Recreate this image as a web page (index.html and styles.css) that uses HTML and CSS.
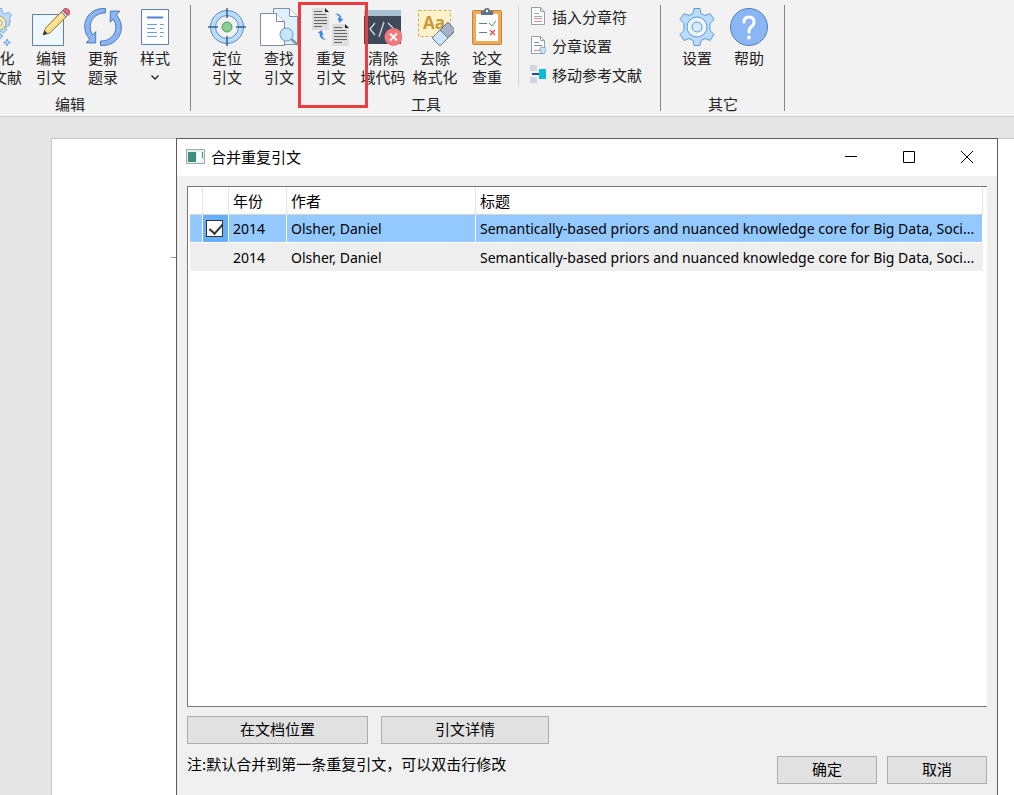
FILE: index.html
```html
<!DOCTYPE html>
<html lang="zh-CN">
<head>
<meta charset="utf-8">
<title>合并重复引文</title>
<link rel="stylesheet" href="styles.css">
</head>
<body>
<header class="ribbon">
  <section class="group group-edit">
    <div class="tools">
      <button type="button" class="tool tool-edge">
        <svg class="icon" viewBox="0 0 38 38"><path d="M19.500.5h4l1 4 3 1.500 3-2 3 3-2 3.500 1 3h-1v4l-4 1.500 1 3-3 3-3.500-2-2.500 1-1 3h-3z" fill="#b9dcff" stroke="#7da7e0"/><circle cx="21" cy="15" r="7" fill="#ffe79b" stroke="#8fa6c4"/><circle cx="21" cy="15" r="3" fill="#f2f2f2" stroke="#8fa6c4"/><path d="M29 31l1 2.500 2.500 1L30 35.500 29 38l-1-2.500-2.500-1 2.500-1zM22 25l1 2 2 1-2 1-1 2-1-2-2-1 2-1z" fill="#b6ddff" stroke="#6f9fdc"/></svg>
        <span>化<br>文献</span>
      </button>
      <button type="button" class="tool">
        <svg class="icon" viewBox="0 0 38 38"><path d="M.5 6.500h31v31H.5z" fill="#f0f8ff" stroke="#5f7fae"/><path d="M11 27l2.500-7L30 3l5 5-17 17z" fill="#ffd97a" stroke="#8a7a52"/><path d="M15.500 22L32 5.500" stroke="#fff0bd" stroke-width="1.500"/><path d="M11 27l1.500-4.500 3 3z" fill="#333"/><path d="M29 4l5 5 1.500-1.500-5-5z" fill="#c9d6e4" stroke="#72849a"/><path d="M31 2l2-1.500q2-.5 4 1.500t.5 4L36 7.500z" fill="#e86b79" stroke="#b54c5b"/></svg>
        <span>编辑<br>引文</span>
      </button>
      <button type="button" class="tool">
        <svg class="icon" viewBox="0 0 38 38"><g fill="#8ab6f5" stroke="#4c79b5"><path d="M21.500.6V5C10 4.500 1.800 16 8.700 27l3-3.300v11.200H2.300L5.500 31C-5.500 18 3.500-1 21.500.6z"/><path d="M16.500 37.400V33C28 33.500 36.200 22 29.300 11l-3 3.300V3.100h9.400L32.500 7C43.500 20 34.500 39 16.500 37.400z"/></g></svg>
        <span>更新<br>题录</span>
      </button>
      <button type="button" class="tool">
        <svg class="icon" viewBox="0 0 38 38"><path d="M5.500 1.500h27v35h-27z" fill="#fff" stroke="#5f7fae"/><path d="M11 9.500h16" stroke="#4d83cf" stroke-width="2"/><path d="M11 16.500h10M11 20.500h8M11 24.500h10M11 28.500h10" stroke="#6b9de0"/><path d="M24 16.500h4M24 20.500h3M24 24.500h4M24 28.500h3" stroke="#6b9de0"/></svg>
        <span>样式</span>
        <svg class="chevron" viewBox="0 0 8 5"><path d="M.5 .5L4 4 7.500.5" fill="none" stroke="#222" stroke-width="1.300"/></svg>
      </button>
    </div>
    <h2 class="caption">编辑</h2>
  </section>

  <section class="group group-tools">
    <div class="tools">
      <button type="button" class="tool">
        <svg class="icon" viewBox="0 0 38 38"><circle cx="19" cy="19" r="14" fill="none" stroke="#b9dcff" stroke-width="5"/><g fill="none" stroke="#5c87b8"><circle cx="19" cy="19" r="16.500"/><circle cx="19" cy="19" r="11.500"/></g><path d="M19 0v10M19 28v10M0 19h10M28 19h10" stroke="#2f6399" stroke-width="1.500"/><circle cx="19" cy="19" r="5" fill="#8bcf96" stroke="#4c9b62"/></svg>
        <span>定位<br>引文</span>
      </button>
      <button type="button" class="tool">
        <svg class="icon" viewBox="0 0 38 38"><path d="M13.500.5h16l8 8v28h-24z" fill="#dff0ff" stroke="#7d93ad"/><path d="M29.500.5v8h8" fill="#fff" stroke="#7d93ad"/><path d="M.5 5.500h16l8 8v24H.5z" fill="#fff" stroke="#7d8da3"/><path d="M16.500 5.500v8h8" fill="#fff" stroke="#7d8da3"/><path d="M31 31l7 6" stroke="#8595a8" stroke-width="2.500"/><circle cx="26.500" cy="26.500" r="6.500" fill="#c5e4ff" stroke="#7298bd"/></svg>
        <span>查找<br>引文</span>
      </button>
      <button type="button" class="tool tool-marked">
        <svg class="icon" viewBox="0 0 38 38"><g id="copy-page"><path d="M0 0h13l4 4v18H0z" fill="#dedede"/><path d="M13 0v4h4z" fill="#222"/><path d="M2 3.500h8M2 6.500h12M2 9.500h13M2 12.500h13M2 15.500h13M2 18.500h8" stroke="#666"/></g><use href="#copy-page" x="20" y="16"/><path d="M23 6q6-1 6.500 5h2l-4 4-2-5h2q-.5-3-4.500-4zM15 32q-8 0-7.500-7h-2l4-3 2 5h-1.500q1 4 5 5z" fill="#4189eb"/></svg>
        <span>重复<br>引文</span>
      </button>
      <button type="button" class="tool">
        <svg class="icon" viewBox="0 0 38 38"><path d="M0 2h37v7H0z" fill="#a9c0d3"/><path d="M0 8h37v28H0z" fill="#40495a"/><path d="M11 15l-5 6 5 6M20 14l-5 15M24 15l5 5" fill="none" stroke="#d6dbe2" stroke-width="1.300"/><circle cx="29.500" cy="29" r="9" fill="#f3777c"/><path d="M26 25.500l7 7M33 25.500l-7 7" stroke="#fff" stroke-width="1.800"/></svg>
        <span>清除<br>域代码</span>
      </button>
      <button type="button" class="tool">
        <svg class="icon" viewBox="0 0 38 38"><path d="M2.500 2.500h32v26h-32z" fill="#fff2ca" stroke="#d6ad48" stroke-dasharray="3 2"/><text class="icon-letters" x="7" y="21">Aa</text><path d="M17 29l13-13q1-1 2 0l6 6q1 1 0 2L25 37q-1 1-2 0l-6-6q-1-1 0-2z" fill="#cde6ff" stroke="#667991"/><path d="M24 22l7-7q1-1 2 0l5 6q1 1 0 2l-6 7z" fill="#a7b3c6" stroke="#667991"/></svg>
        <span>去除<br>格式化</span>
      </button>
      <button type="button" class="tool">
        <svg class="icon" viewBox="0 0 38 38"><rect x="4.500" y="2.500" width="29" height="34" rx="1" fill="#f0ac52" stroke="#bd8540"/><path d="M8 6h22v27H8z" fill="#fff"/><path d="M13 7V3h3q0-3 3-3t3 3h3v4z" fill="#60748e"/><circle cx="19" cy="3" r="1.200" fill="#fff"/><path d="M11 15.500h8M11 24.500h8" stroke="#697b92"/><path d="M21 15l3 3 4-5" fill="none" stroke="#449d62"/><path d="M22 22l5 5M27 22l-5 5" stroke="#dc4f52" stroke-width="1.300"/></svg>
        <span>论文<br>查重</span>
      </button>
      <div class="small-tools">
        <button type="button" class="small-tool">
          <svg class="small-icon" viewBox="0 0 16 18"><path d="M1.500.5h9l4 4v13h-13z" fill="#fff" stroke="#96a0aa"/><path d="M10.500.5v4h4" fill="none" stroke="#96a0aa"/><path d="M4 6.500h5M4 9.500h8" stroke="#9aa"/><path d="M4 11.500h8M4 14.500h8" stroke="#ee8792"/></svg>
          插入分章符
        </button>
        <button type="button" class="small-tool">
          <svg class="small-icon" viewBox="0 0 16 18"><path d="M1.500.5h9l4 4v13h-13z" fill="#fff" stroke="#96a0aa"/><path d="M10.500.5v4h4" fill="none" stroke="#96a0aa"/><path d="M4 6.500h5M4 9.500h8" stroke="#889"/><path d="M4 14.500h6" stroke="#ee8792"/><path d="M10 12l3-1 3 1v3l-3 3-3-3z" fill="#cce9fc" stroke="#72abd5"/></svg>
          分章设置
        </button>
        <button type="button" class="small-tool">
          <svg class="small-icon" viewBox="0 0 16 18"><path d="M0 0h7v6H0zM0 12h7v6H0z" fill="#d3d6de"/><path d="M2 8h7v2H2z" fill="#284795"/><path d="M9 4h7v10H9z" fill="#06bfd2"/></svg>
          移动参考文献
        </button>
      </div>
    </div>
    <h2 class="caption">工具</h2>
  </section>

  <section class="group group-other">
    <div class="tools">
      <button type="button" class="tool">
        <svg class="icon" viewBox="0 0 38 38"><path d="M16 .5h6l1 5 4 2 5-2 4 6-4 4v7l4 4-4 6-5-2-4 2-1 5h-6l-1-5-4-2-5 2-4-6 4-4v-7l-4-4 4-6 5 2 4-2z" fill="#b9dcff" stroke="#5f97d3" stroke-linejoin="round"/><circle cx="19" cy="19" r="10" fill="#edf6ff" stroke="#5f97d3"/><circle cx="19" cy="19" r="5" fill="#d5eaff" stroke="#5f97d3"/></svg>
        <span>设置</span>
      </button>
      <button type="button" class="tool">
        <svg class="icon" viewBox="0 0 38 38"><circle cx="19" cy="19" r="18.500" fill="#8ab6f5" stroke="#4e7db8"/><path d="M14 14q0-5 5-5t5 5q0 3-3 5-2 1.500-2 5" fill="none" stroke="#fff" stroke-width="3" stroke-linecap="round"/><circle cx="19" cy="29.500" r="2" fill="#fff"/></svg>
        <span>帮助</span>
      </button>
    </div>
    <h2 class="caption">其它</h2>
  </section>
</header>

<main class="workspace">
  <div class="sheet"></div>
  <section class="dialog" role="dialog" aria-labelledby="dialog-title">
    <div class="titlebar">
      <svg class="app-icon" viewBox="0 0 19 15"><path d="M.5.500h18v14H.5z" fill="#e9eef3" stroke="#9ea9b1"/><path d="M2 3h8v10H2z" fill="#3f8f80"/><path d="M11 3h4v10h-4z" fill="#fff"/><path d="M16.500 3v6" stroke="#4e9a80"/></svg>
      <h1 class="title" id="dialog-title">合并重复引文</h1>
      <button type="button" class="window-button" aria-label="最小化"><svg viewBox="0 0 12 12"><path d="M0 5.500h12" stroke="#000"/></svg></button>
      <button type="button" class="window-button" aria-label="最大化"><svg viewBox="0 0 12 12"><path d="M.5.500h11v11H.5z" fill="none" stroke="#000"/></svg></button>
      <button type="button" class="window-button" aria-label="关闭"><svg viewBox="0 0 12 12"><path d="M0 0l12 12M12 0L0 12" stroke="#000"/></svg></button>
    </div>
    <div class="dialog-body">
      <div class="list">
        <table class="citations">
          <colgroup><col class="col-handle"><col class="col-check"><col class="col-year"><col class="col-author"><col></colgroup>
          <thead>
            <tr><th></th><th></th><th>年份</th><th>作者</th><th>标题</th></tr>
          </thead>
          <tbody>
            <tr class="selected"><td></td><td class="check-cell"><input type="checkbox" class="check" aria-label="选择引文" checked></td><td>2014</td><td>Olsher, Daniel</td><td>Semantically-based priors and nuanced knowledge core for Big Data, Soci...</td></tr>
            <tr class="alternate"><td></td><td></td><td>2014</td><td>Olsher, Daniel</td><td>Semantically-based priors and nuanced knowledge core for Big Data, Soci...</td></tr>
          </tbody>
        </table>
      </div>
      <div class="actions">
        <button type="button" class="button button-locate">在文档位置</button>
        <button type="button" class="button button-details">引文详情</button>
      </div>
      <div class="footer">
        <p class="note">注:默认合并到第一条重复引文，可以双击行修改</p>
        <button type="button" class="button">确定</button>
        <button type="button" class="button">取消</button>
      </div>
    </div>
  </section>
</main>
</body>
</html>
```
FILE: styles.css
```css
* {
  box-sizing: border-box;
}

body {
  margin: 0;
  height: 100vh;
  display: flex;
  flex-direction: column;
  overflow: hidden;
  background: #e5e5e5;
  color: #222;
  font: 15px/19px "Noto Sans CJK SC", sans-serif;
}

button {
  font: inherit;
  color: inherit;
  padding: 0;
  border: 0;
  background: none;
}

svg {
  display: block;
}

h1,
h2,
p {
  margin: 0;
  font-size: 15px;
  font-weight: 400;
}

/* Ribbon */
.ribbon {
  display: flex;
  flex: none;
  padding: 5px 0;
  background: #f2f2f2;
  border-bottom: 1px solid #cdcdcd;
}

.group {
  flex: none;
  display: flex;
  flex-direction: column;
  justify-content: space-between;
  padding: 3px 9px 0 10px;
  border-right: 1px solid #858585;
  height: 106px;
}

.group-edit {
  margin-left: -50px;
  padding-left: 39px;
}

.group-tools {
  width: 470px;
}

.tools {
  display: flex;
}

.tool {
  position: relative;
  flex: none;
  width: 52px;
  display: flex;
  flex-direction: column;
  align-items: center;
  white-space: nowrap;
}

.tool-edge {
  width: 36px;
}

.tool-edge .icon {
  margin-left: -20px;
}

.icon {
  width: 38px;
  height: 38px;
  margin-bottom: 2px;
}

.icon-letters {
  font: 700 17px "Open Sans", sans-serif;
  fill: #c79a3b;
}

.chevron {
  width: 8px;
  height: 5px;
  margin-top: 8px;
}

.tool-marked::after {
  content: "";
  position: absolute;
  inset: -6px -11px -22px -7px;
  border: 3px solid #ec3c40;
  z-index: 1;
}

.small-tools {
  display: flex;
  flex-direction: column;
  gap: 9px;
  margin: -2px 0 0 5px;
  padding-left: 11px;
  border-left: 1px solid #d2d2d2;
}

.small-tool {
  display: flex;
  align-items: center;
  gap: 6px;
  height: 20px;
  white-space: nowrap;
}

.small-icon {
  width: 16px;
  height: 18px;
}

.caption {
  text-align: center;
  line-height: 14px;
}

.group-edit .caption {
  margin-left: -30px;
}

/* Document area */
.workspace {
  position: relative;
  flex: 1;
  min-height: 0;
  display: flex;
  padding: 21px 0 0 51px;
}

.sheet {
  flex: 1;
  background: #fff;
  border: 1px solid #c6c6c6;
  border-width: 1px 0 0 1px;
}

/* Dialog */
.dialog {
  position: absolute;
  top: 21px;
  bottom: 0;
  left: 176px;
  right: 16px;
  display: flex;
  flex-direction: column;
  background: #f0f0f0;
  border: 1px solid #5c5c5c;
  border-bottom: 0;
  color: #000;
}

.dialog::before {
  content: "";
  position: absolute;
  left: -6px;
  top: 118px;
  width: 5px;
  height: 1px;
  background: #999;
}

.titlebar {
  flex: none;
  display: flex;
  align-items: center;
  height: 37px;
  padding: 0 1px 2px 9px;
  background: #fff;
}

.app-icon {
  width: 19px;
  height: 15px;
  margin-right: 6px;
}

.title {
  flex: 1;
}

.window-button {
  width: 58px;
  height: 34px;
  display: flex;
  align-items: center;
  justify-content: center;
}

.window-button svg {
  width: 12px;
  height: 12px;
}

.dialog-body {
  flex: 1;
  min-height: 0;
  display: flex;
  flex-direction: column;
  padding: 10px 10px 11px;
}

.list {
  flex: 1;
  min-height: 0;
  padding: 0 4px 0 2px;
  overflow: hidden;
  background: #fff;
  border: 1px solid #777;
  border-right: 0;
}

.citations {
  width: 100%;
  table-layout: fixed;
  border-spacing: 0;
}

.col-handle {
  width: 13px;
}

.col-check {
  width: 26px;
}

.col-year {
  width: 58px;
}

.col-author {
  width: 189px;
}

.citations th,
.citations td {
  height: 28px;
  padding: 0 0 0 4px;
  text-align: left;
  font-weight: 400;
  white-space: nowrap;
  border-right: 1px solid #e5e5e5;
}

.citations th {
  border-bottom: 1px solid #d5d5d5;
}

.citations td {
  font: 14px/19px "Noto Sans", "Noto Sans CJK SC", sans-serif;
}

.selected td {
  background: #94c9ff;
  border-right-color: #fff;
  border-bottom: 1px solid #fff;
}

.citations .check-cell {
  padding-left: 3px;
  background: #66b0fb;
}

.alternate td {
  background: #eee;
  border-right-color: #eee;
}

.check {
  appearance: none;
  display: block;
  position: relative;
  width: 17px;
  height: 17px;
  margin: 0;
  background: #fff;
  border: 1px solid #333;
}

.check:checked::after {
  content: "";
  position: absolute;
  left: 5px;
  top: 0;
  width: 6px;
  height: 11px;
  border: solid #333;
  border-width: 0 2px 2px 0;
  transform: rotate(42deg);
}

.actions {
  display: flex;
  gap: 13px;
  margin-top: 9px;
}

.button {
  width: 100px;
  height: 28px;
  padding-bottom: 3px;
  background: #e1e1e1;
  border: 1px solid #adadad;
}

.button-locate {
  width: 181px;
}

.button-details {
  width: 168px;
}

.footer {
  display: flex;
  align-items: flex-start;
  gap: 10px;
  margin-top: 12px;
}

.note {
  flex: 1;
  line-height: 16px;
}
```
